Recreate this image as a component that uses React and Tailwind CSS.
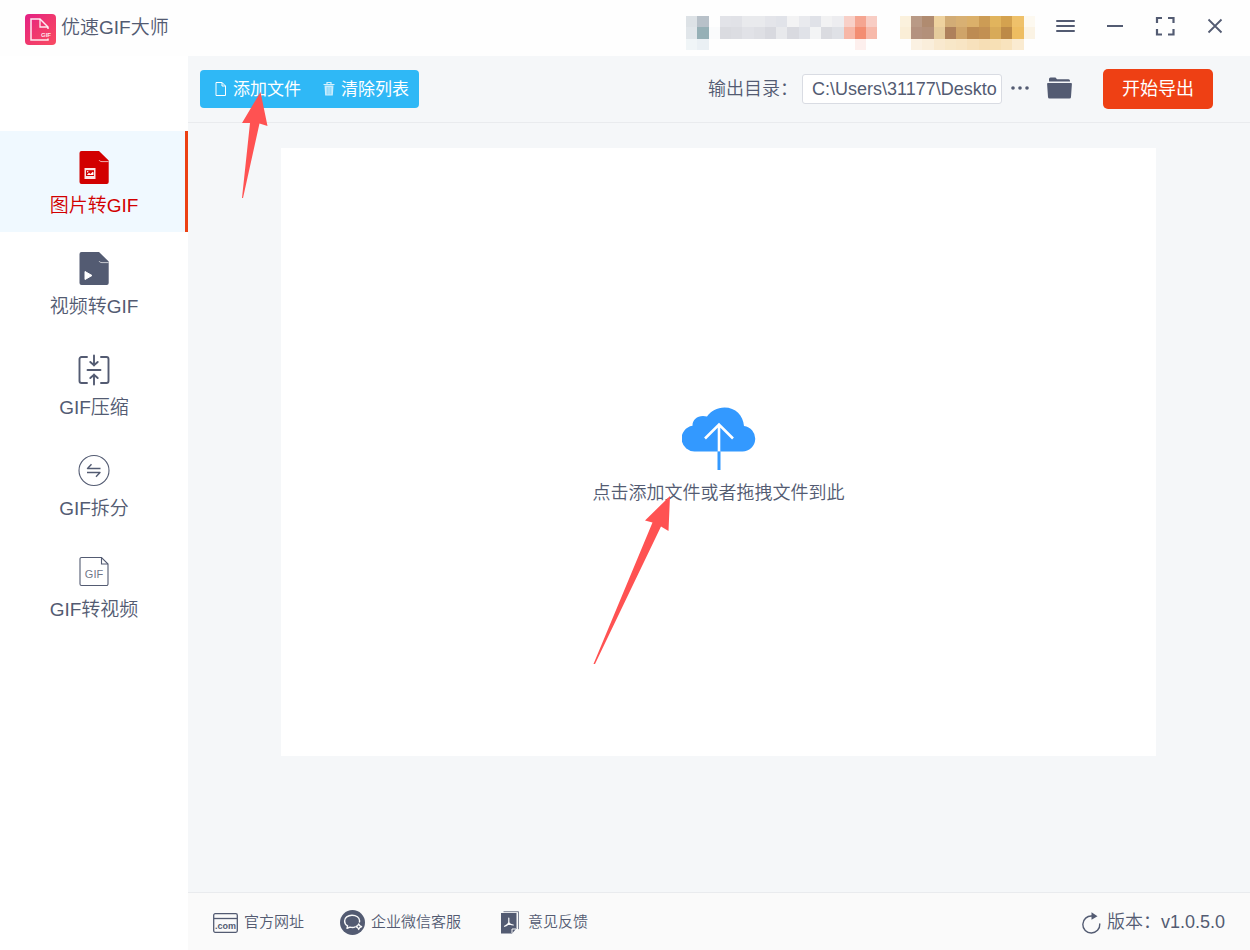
import { useState } from 'react'

const NAV_ITEMS = [
  { id: 'img2gif',   icon: ImageFileIcon, label: '图片转GIF' },
  { id: 'video2gif', icon: VideoFileIcon, label: '视频转GIF' },
  { id: 'compress',  icon: CompressIcon,  label: 'GIF压缩'   },
  { id: 'split',     icon: SplitIcon,     label: 'GIF拆分'   },
  { id: 'gif2video', icon: GifFileIcon,   label: 'GIF转视频' },
]

const FOOTER_LINKS = [
  { icon: WebsiteIcon,  label: '官方网址',     spacing: 'gap-1.5' },
  { icon: ChatIcon,     label: '企业微信客服', spacing: 'gap-1.5' },
  { icon: FeedbackIcon, label: '意见反馈',     spacing: 'gap-2 pl-1' },
]

// Blurred account area: one row of cells per line, '' = empty cell
const MOSAIC = [
  ['#dde2e6', '#b8c1c9', '', '#e2e3e8', '#e1e2e7', '#e9eaed', '#e9eaed', '#e4e5ea', '#e1e3e9', '#f3f3f4', '#e9eaee', '#e0e2e8', '#f2f2f3', '#ededf0', '#f8d0c8', '#f5a591', '#f8cdc4', '', '', '#fbf1dd', '#b99a86', '#b08b70', '#eed29f', '#d2ac76', '#d8b073', '#dbb06a', '#cc9c55', '#e1b45d', '#d4a24f', '#efc16a', '#fdf9f0'],
  ['#e1e6ea', '#96b0b6', '#fafbfc', '#dadbe0', '#dcdde2', '#e1e2e7', '#dedfe4', '#d8d9df', '#e8e9ec', '#d9dae0', '#e0e2e8', '#f3f4f5', '#dadbe0', '#dfe1e6', '#f7b7a7', '#f38d72', '#f7b9aa', '', '', '#faeed7', '#b4927f', '#b3907a', '#e5cb9c', '#ae805b', '#cfa469', '#bd8b52', '#c29052', '#d8aa58', '#bd8a47', '#eebd61', '#fbf3e4'],
  ['#f0f5f7', '#eaf0f4', '', '', '', '', '', '', '', '', '', '', '', '', '', '#fdefed', '', '', '', '', '#fbf1e2', '#faeedb', '#f9e9cf', '#f8e7c8', '#f8e5c4', '#f7e1bc', '#f6deb5', '#f7e0b5', '#f8e3bd', '#faebd1', ''],
]

function Mosaic() {
  return (
    <svg className="w-[349px] h-[34px] flex-shrink-0" viewBox="0 0 31 3" preserveAspectRatio="none" shapeRendering="crispEdges" aria-hidden="true">
      {MOSAIC.map((row, y) => row.map((fill, x) => fill && (
        <rect key={`${x}-${y}`} x={x} y={y} width="1" height="1" fill={fill} />
      )))}
    </svg>
  )
}

function LogoIcon() {
  return (
    <svg width="31" height="31" viewBox="0 0 31 31" fill="none" aria-hidden="true">
      <defs>
        <linearGradient id="logo" x1="0" y1="0" x2="1" y2="1">
          <stop offset="0" stopColor="#e32086" />
          <stop offset="0.5" stopColor="#f0386e" />
          <stop offset="1" stopColor="#f94a62" />
        </linearGradient>
      </defs>
      <rect width="31" height="31" rx="4" fill="url(#logo)" />
      <path d="M23 24.500V26H6V5h9l8 8v2" stroke="#fff" strokeOpacity="0.9" strokeWidth="1.500" />
      <path d="M15 5v8h8" stroke="#fff" strokeOpacity="0.9" strokeWidth="1.300" />
      <text x="16" y="23" fill="#fff" fillOpacity="0.9" fontSize="6" fontWeight="700" fontFamily="Liberation Sans, sans-serif">GIF</text>
    </svg>
  )
}

function ImageFileIcon() {
  return (
    <svg width="34" height="34" viewBox="0 0 34 34" fill="none" aria-hidden="true">
      <path d="M4.500 0H22l9.700 9.500V31a2 2 0 0 1-2 2H4.500a2 2 0 0 1-2-2V2a2 2 0 0 1 2-2z" fill="currentColor" />
      <path d="M22 9c.5 1 1.500 1.600 3 1.600h6.500" stroke="#fff" strokeOpacity="0.75" strokeWidth="0.9" />
      <path d="M7.500 17h11v11h-11z" fill="#fff" fillOpacity="0.9" />
      <path d="M9 19.200h8v5.800H9z" fill="currentColor" />
      <path d="m9.800 24 2.200-2.200 1.500 1.200 2.300-2.300.7.800v2.500z" fill="#fff" />
      <circle cx="10.700" cy="20.700" r=".8" fill="#fff" />
    </svg>
  )
}

function VideoFileIcon() {
  return (
    <svg width="34" height="34" viewBox="0 0 34 34" fill="none" aria-hidden="true">
      <path d="M4.500 0H22l9.700 9.500V31a2 2 0 0 1-2 2H4.500a2 2 0 0 1-2-2V2a2 2 0 0 1 2-2z" fill="currentColor" />
      <path d="M22 9c.5 1 1.500 1.600 3 1.600h6.500" stroke="#fff" strokeOpacity="0.75" strokeWidth="0.9" />
      <path d="m8 19.500 7 4-7 4z" fill="#fff" stroke="#fff" strokeLinejoin="round" />
    </svg>
  )
}

function CompressIcon() {
  return (
    <svg width="34" height="34" viewBox="0 0 34 34" fill="none" stroke="currentColor" strokeWidth="1.900" strokeLinecap="round" aria-hidden="true">
      <path d="M10 4H4.500a2 2 0 0 0-2 2v22a2 2 0 0 0 2 2H10M24 4h5.500a2 2 0 0 1 2 2v22a2 2 0 0 1-2 2H24" />
      <path d="M10.500 17h13" />
      <path d="M17 2.500v10M13.300 9l3.700 3.300L20.700 9M17 31.500v-10M13.300 25l3.700-3.300 3.700 3.300" />
    </svg>
  )
}

function SplitIcon() {
  return (
    <svg width="34" height="34" viewBox="0 0 34 34" fill="none" stroke="currentColor" aria-hidden="true">
      <circle cx="17" cy="16.500" r="15" strokeWidth="1.100" />
      <path d="M23.500 14.500H10.500l4-4.200M10 18.500h13l-4 4.200" strokeWidth="1.400" strokeLinejoin="round" />
    </svg>
  )
}

function GifFileIcon() {
  return (
    <svg width="34" height="34" viewBox="0 0 34 34" fill="none" stroke="currentColor" aria-hidden="true">
      <path d="M4.500 2.500h20l6.500 6.500v20a1.500 1.500 0 0 1-1.500 1.500h-25A1.500 1.500 0 0 1 3 29V4a1.500 1.500 0 0 1 1.500-1.500z" strokeWidth="1.100" />
      <path d="M24.500 2.500V9H31" strokeWidth="1.100" />
      <text x="17" y="23" textAnchor="middle" fill="currentColor" fillOpacity="0.85" stroke="none" fontSize="11" fontFamily="Liberation Sans, sans-serif">GIF</text>
    </svg>
  )
}

function FileIcon() {
  return (
    <svg width="12" height="14" viewBox="0 0 12 14" fill="none" stroke="currentColor" aria-hidden="true">
      <path d="M1 .5h6L10.500 4v9.500H1zM7 .5V4h3.500" />
    </svg>
  )
}

function TrashIcon() {
  return (
    <svg width="12" height="14" viewBox="0 0 12 14" fill="none" stroke="currentColor" aria-hidden="true">
      <path d="M4 2V.5h4V2M.5 2.500h11" strokeWidth="1.200" opacity="0.8" />
      <path d="M1.500 3.500h9l-.7 10H2.200z" fill="currentColor" stroke="none" opacity="0.75" />
      <path d="M4.200 5v7.500M6 5v7.500M7.800 5v7.500" stroke="#2fb8f6" strokeWidth=".5" />
    </svg>
  )
}

function FolderIcon() {
  return (
    <svg width="25" height="22" viewBox="0 0 25 22" fill="currentColor" aria-hidden="true">
      <path d="M2 4.500V2a1.500 1.500 0 0 1 1.500-1.500h5L10 2.300h11.500A1.500 1.500 0 0 1 23 3.800v.7z" />
      <path d="M1 6h23a.9.9 0 0 1 .9 1l-.9 13a1.500 1.500 0 0 1-1.500 1.500h-20A1.500 1.500 0 0 1 1 20L.1 7A.9.9 0 0 1 1 6z" />
    </svg>
  )
}

function CloudUploadIcon() {
  return (
    <svg width="74" height="63" viewBox="0 0 74 63" fill="none" aria-hidden="true">
      <path d="M13.500 44.500A13 13 0 0 1 10.500 18.700C10.500 11.500 17 7.500 25 9.500 29 4 35 .5 42.500.500c11 0 18.800 8 19.500 18.500a12.800 12.800 0 0 1-1.500 25.500z" fill="#3399ff" />
      <path d="M37 17v27.500M23 31.500l14-14 14 14" stroke="#fff" strokeWidth="2.600" />
      <path d="M37 44.500V63" stroke="#3399ff" strokeWidth="3" />
    </svg>
  )
}

function WebsiteIcon() {
  return (
    <svg width="25" height="20" viewBox="0 0 25 20" fill="none" stroke="currentColor" aria-hidden="true">
      <rect x=".7" y=".7" width="23.600" height="18.600" rx="1.500" strokeWidth="1.300" />
      <path d="M1 5.500h23" strokeWidth="1.300" />
      <text x="12.500" y="16" textAnchor="middle" fill="currentColor" stroke="none" fontSize="9" fontWeight="700" fontFamily="Liberation Sans Narrow, Liberation Sans, sans-serif">.com</text>
    </svg>
  )
}

function ChatIcon() {
  return (
    <svg width="25" height="25" viewBox="0 0 25 25" fill="none" aria-hidden="true">
      <circle cx="12.500" cy="12.500" r="12.500" fill="currentColor" />
      <path d="M19.300 12.500c.2-.6.300-1.200.3-1.800 0-3.200-3.400-5.500-7.600-5.500s-7.400 2.500-7.400 5.700c0 2.200 1.200 4 3 5l-.6 2.500 3-1.300c1.800.5 3.700.5 5.200-.2" stroke="#fafafa" strokeWidth="1.400" strokeLinejoin="round" />
      <path d="m18.700 13.900 1 1.700 1.900 1-1.900 1-1 1.900-1-1.900-1.900-1 1.900-1z" stroke="#fafafa" strokeWidth="1.200" strokeLinejoin="round" />
    </svg>
  )
}

function FeedbackIcon() {
  return (
    <svg width="19" height="23" viewBox="0 0 19 23" fill="none" aria-hidden="true">
      <path d="M2.500.7h15v17.500" stroke="currentColor" strokeWidth="1" opacity="0.75" />
      <path d="M0 2h15.500v15.500l-4.500 5H0z" fill="currentColor" />
      <path d="M15 18h-4v4" stroke="#fafafa" />
      <path d="M7.800 7v4.500c-.4 1.700-1.700 3-4.300 3.800M7.800 11.500c.6 1.500 2 2.300 4.500 2.500M6 13.500h4" stroke="#fafafa" strokeWidth="1.200" strokeLinecap="round" />
    </svg>
  )
}

function RefreshIcon() {
  return (
    <svg width="20" height="22" viewBox="0 0 20 22" fill="none" aria-hidden="true">
      <path d="M11 4A8.500 8.500 0 1 0 18.800 12" stroke="currentColor" strokeWidth="1.400" strokeLinecap="round" />
      <path d="m10.500.3 6 4-6 3.400z" fill="currentColor" />
    </svg>
  )
}

function WindowControls() {
  return (
    <div className="flex">
      <button aria-label="菜单" className="w-[50px] h-10 flex items-center justify-center">
        <svg width="20" height="14" viewBox="0 0 20 14" stroke="currentColor" strokeWidth="2" strokeLinecap="round">
          <path d="M2 2h17M2 7h17M2 12h17" />
        </svg>
      </button>
      <button aria-label="最小化" className="w-[50px] h-10 flex items-center justify-center">
        <svg width="16" height="2" viewBox="0 0 16 2" stroke="currentColor" strokeWidth="2">
          <path d="M0 1h16" />
        </svg>
      </button>
      <button aria-label="最大化" className="w-[50px] h-10 flex items-center justify-center">
        <svg width="20" height="20" viewBox="0 0 20 20" fill="none" stroke="currentColor" strokeWidth="2.200">
          <path d="M7 2H2v5M13 2h5.500v5M7 18.500H2V13M13 18.500h5.500V13" />
        </svg>
      </button>
      <button aria-label="关闭" className="w-[50px] h-10 flex items-center justify-center">
        <svg width="16" height="16" viewBox="0 0 16 16" stroke="currentColor" strokeWidth="1.800">
          <path d="m1.500 1.500 13 13M14.500 1.500l-13 13" />
        </svg>
      </button>
    </div>
  )
}

function TitleBar() {
  return (
    <header className="h-14 flex items-center bg-[#fefefe] pl-[25px] pr-2.5">
      <div className="flex items-center gap-[5px] pt-[3px]">
        <LogoIcon />
        <h1 className="text-[19px] leading-7 pb-[3px]">优速GIF大师</h1>
      </div>
      <div className="ml-auto flex items-center gap-[5px]">
        <div className="pt-[9px]">
          <Mosaic />
        </div>
        <div className="pb-1">
          <WindowControls />
        </div>
      </div>
    </header>
  )
}

function Sidebar({ active, onSelect }) {
  return (
    <nav className="w-[188px] flex-shrink-0 bg-white pt-[75px]">
      {NAV_ITEMS.map(({ id, icon: Icon, label }) => (
        <button
          key={id}
          onClick={() => onSelect(id)}
          className={`
            w-full h-[101px] flex flex-col items-center gap-[7px] pt-5 pl-[3px] border-r-[3px]
            ${active === id
              ? 'bg-[#f0f9ff] border-[#ec4114] text-[#d20000]'
              : 'border-transparent'}
          `}
        >
          <Icon />
          <span className="text-[19px] leading-7">{label}</span>
        </button>
      ))}
    </nav>
  )
}

function Toolbar() {
  const [dir, setDir] = useState('C:\\Users\\31177\\Deskto')

  return (
    <div className="h-[67px] flex items-center justify-between pl-3 pr-[37px] border-b border-[#e9ebee]">
      <div className="relative flex h-[38px] rounded bg-[#2fb8f6] text-white text-[17px] font-normal">
        <button className="flex items-center gap-1.5 pl-[15px] pr-2.5">
          <FileIcon />
          <span className="pt-0.5">添加文件</span>
        </button>
        <button className="flex items-center gap-1.5 pl-3 pr-2.5">
          <TrashIcon />
          <span className="pt-0.5">清除列表</span>
        </button>
        {/* Hint arrow */}
        <svg className="absolute left-[42px] top-[22px] z-10 pointer-events-none" width="26" height="107" viewBox="0 0 26 107" aria-hidden="true">
          <path d="M18.500 0 25.500 34l-8-2.500L1 106H0L8 31H0z" fill="#ff5252" />
        </svg>
      </div>

      <div className="flex items-center">
        <label htmlFor="output-dir" className="text-[18px] mr-1">输出目录：</label>
        <input
          id="output-dir"
          value={dir}
          onChange={e => setDir(e.target.value)}
          className="w-[200px] h-[30px] pl-[9px] pr-1 rounded-[3px] border border-[#d9dce3] bg-white text-[18px] outline-none"
        />
        <button aria-label="浏览" className="ml-[9px] pb-0.5">
          <svg width="18" height="4" viewBox="0 0 18 4" fill="currentColor">
            <circle cx="2" cy="2" r="1.800" />
            <circle cx="9" cy="2" r="1.800" />
            <circle cx="16" cy="2" r="1.800" />
          </svg>
        </button>
        <button aria-label="打开文件夹" className="ml-[18px] pb-0.5">
          <FolderIcon />
        </button>
        <button className="ml-[31px] w-[110px] h-10 rounded-[5px] bg-[#ee4014] text-white text-[18px] font-normal">
          开始导出
        </button>
      </div>
    </div>
  )
}

function DropZone() {
  return (
    <div className="flex-1 flex pl-[93px] pr-[94px] pt-[25px] pb-[136px]">
      <button className="flex-1 flex flex-col items-center justify-center gap-[9px] pt-2.5 bg-white">
        <CloudUploadIcon />
        <span className="relative text-[18px] leading-7">
          点击添加文件或者拖拽文件到此
          {/* Hint arrow */}
          <svg className="absolute left-0 top-[17px] pointer-events-none" width="78" height="168" viewBox="0 0 78 168" aria-hidden="true">
            <path d="m77 0-1.500 35-7.500-4.500L2 168H0.500L59.500 26.500 52 24.500z" fill="#ff5252" />
          </svg>
        </span>
      </button>
    </div>
  )
}

function Footer() {
  return (
    <footer className="h-[58px] flex items-center justify-between px-[25px] pt-0.5 bg-[#fafafa] border-t border-[#e9ebee]">
      <div className="flex items-center gap-9">
        {FOOTER_LINKS.map(({ icon: Icon, label, spacing }) => (
          <a key={label} href="#" className={`flex items-center text-[15px] ${spacing}`}>
            <Icon />
            {label}
          </a>
        ))}
      </div>
      <button className="flex items-center gap-1.5 text-[18px]">
        <RefreshIcon />
        版本：v1.0.5.0
      </button>
    </footer>
  )
}

export default function App() {
  const [active, setActive] = useState('img2gif')

  return (
    <div className="min-h-screen flex flex-col bg-[#f5f7f9] text-[#535b72] font-[350] font-['Liberation_Sans','Noto_Sans_CJK_SC',sans-serif]">
      <TitleBar />
      <div className="flex-1 flex">
        <Sidebar active={active} onSelect={setActive} />
        <main className="flex-1 min-w-0 flex flex-col">
          <Toolbar />
          <DropZone />
          <Footer />
        </main>
      </div>
    </div>
  )
}
